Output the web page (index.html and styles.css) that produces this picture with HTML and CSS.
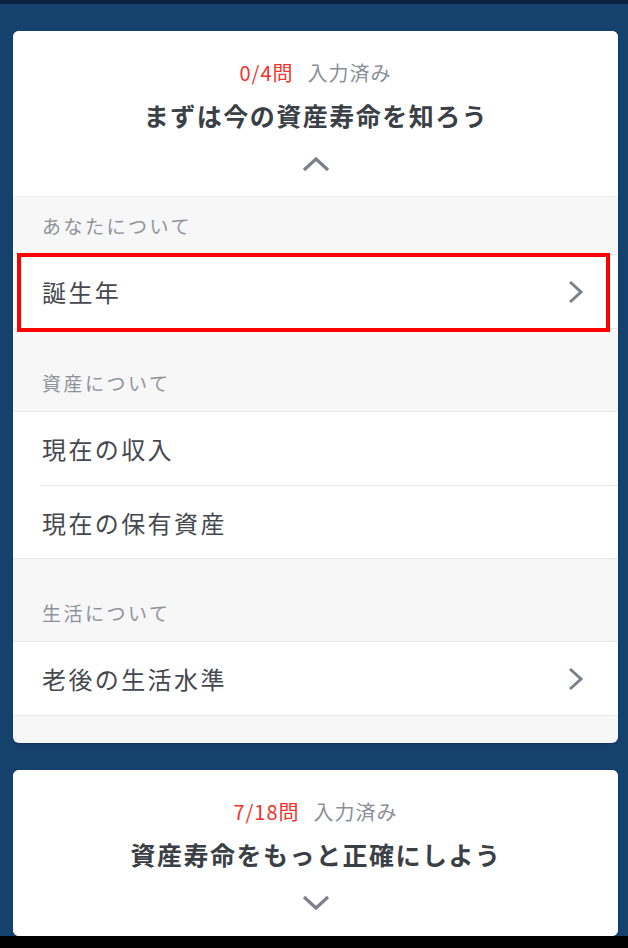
FILE: index.html
```html
<!DOCTYPE html>
<html lang="ja">

<head>
    <meta charset="UTF-8">
    <meta name="viewport" content="width=device-width, initial-scale=1.0">
    <title>資産寿命</title>
    <link rel="stylesheet" href="styles.css">
</head>

<body>
    <div class="topBar"></div>
    <main class="page">
        <section class="card">
            <div class="cardHead">
                <p class="count"><span class="done">0/4問</span><span class="label">入力済み</span></p>
                <h2 class="title">まずは今の資産寿命を知ろう</h2>
                <svg class="toggle" width="28" height="16" viewBox="0 0 28 16">
                    <path d="M2 14 L14 3 L26 14" fill="none" stroke="#7b818b" stroke-width="3.2" />
                </svg>
            </div>

            <div class="group first">
                <div class="groupTitle">あなたについて</div>
                <ul class="rows">
                    <li class="row marked">誕生年
                        <svg class="arrow" width="16" height="24" viewBox="0 0 16 24">
                            <path d="M2 2 L13 12 L2 22" fill="none" stroke="#7b818b" stroke-width="3" />
                        </svg>
                    </li>
                </ul>
            </div>

            <div class="group">
                <div class="groupTitle">資産について</div>
                <ul class="rows">
                    <li class="row">現在の収入</li>
                    <li class="row">現在の保有資産</li>
                </ul>
            </div>

            <div class="group">
                <div class="groupTitle">生活について</div>
                <ul class="rows">
                    <li class="row">老後の生活水準
                        <svg class="arrow" width="16" height="24" viewBox="0 0 16 24">
                            <path d="M2 2 L13 12 L2 22" fill="none" stroke="#7b818b" stroke-width="3" />
                        </svg>
                    </li>
                </ul>
            </div>
            <div class="cardFoot"></div>
        </section>

        <section class="card">
            <div class="cardHead">
                <p class="count"><span class="done">7/18問</span><span class="label">入力済み</span></p>
                <h2 class="title">資産寿命をもっと正確にしよう</h2>
                <svg class="toggle" width="28" height="16" viewBox="0 0 28 16">
                    <path d="M2 2 L14 13 L26 2" fill="none" stroke="#7b818b" stroke-width="3.2" />
                </svg>
            </div>
        </section>
    </main>
    <div class="bottomBar"></div>
</body>

</html>
```

FILE: styles.css
```css
* {
    margin: 0;
    padding: 0;
    box-sizing: border-box;
}

body {
    background: #15416f;
    font-family: "Noto Sans CJK JP", "Noto Sans", sans-serif;
    width: 628px;
    height: 948px;
    overflow: hidden;
    display: flex;
    flex-direction: column;
}

.topBar {
    height: 4px;
    background: #0b2343;
}

.page {
    flex: 1;
    padding: 27px 10px 0 13px;
    display: flex;
    flex-direction: column;
    gap: 27px;
}

.bottomBar {
    height: 12px;
    background: #000;
}

.card {
    background: #f7f7f7;
    border-radius: 6px;
    overflow: hidden;
    box-shadow: 0 1px 2px rgba(0, 0, 0, 0.25);
}

.cardHead {
    background: #fff;
    height: 166px;
    padding-top: 29px;
    display: flex;
    flex-direction: column;
    align-items: center;
}

.card:first-child .cardHead {
    border-bottom: 1px solid #ececec;
}

.count {
    font-size: 20px;
    line-height: 26px;
    height: 26px;
    letter-spacing: 1px;
}

.done {
    color: #f2332b;
    margin-right: 14px;
}

.count .label {
    color: #8a8f98;
}

.title {
    margin-top: 12px;
    font-size: 25px;
    font-weight: bold;
    line-height: 34px;
    color: #3b3f46;
    letter-spacing: 1.5px;
    padding-left: 1px;
}

.toggle {
    margin-top: 24px;
}

.group {
    padding-top: 25px;
}

.group.first {
    padding-top: 0;
}

.groupTitle {
    height: 57px;
    line-height: 57px;
    padding-left: 29px;
    font-size: 19px;
    letter-spacing: 2.5px;
    color: #8e939b;
}

.rows {
    list-style: none;
    background: #fff;
    border-top: 1px solid #e8e8e8;
    border-bottom: 1px solid #e8e8e8;
    padding-left: 27px;
}

.row {
    position: relative;
    height: 73px;
    display: flex;
    align-items: center;
    justify-content: space-between;
    padding: 0 34px 0 2px;
    font-size: 24px;
    letter-spacing: 2.4px;
    color: #45484e;
}

.row + .row {
    border-top: 1px solid #e8e8e8;
}

.row.marked::after {
    content: '';
    position: absolute;
    left: -23px;
    right: 8px;
    top: -2px;
    bottom: -4px;
    border: 4px solid #ff0000;
}

.cardFoot {
    height: 27px;
}
```
